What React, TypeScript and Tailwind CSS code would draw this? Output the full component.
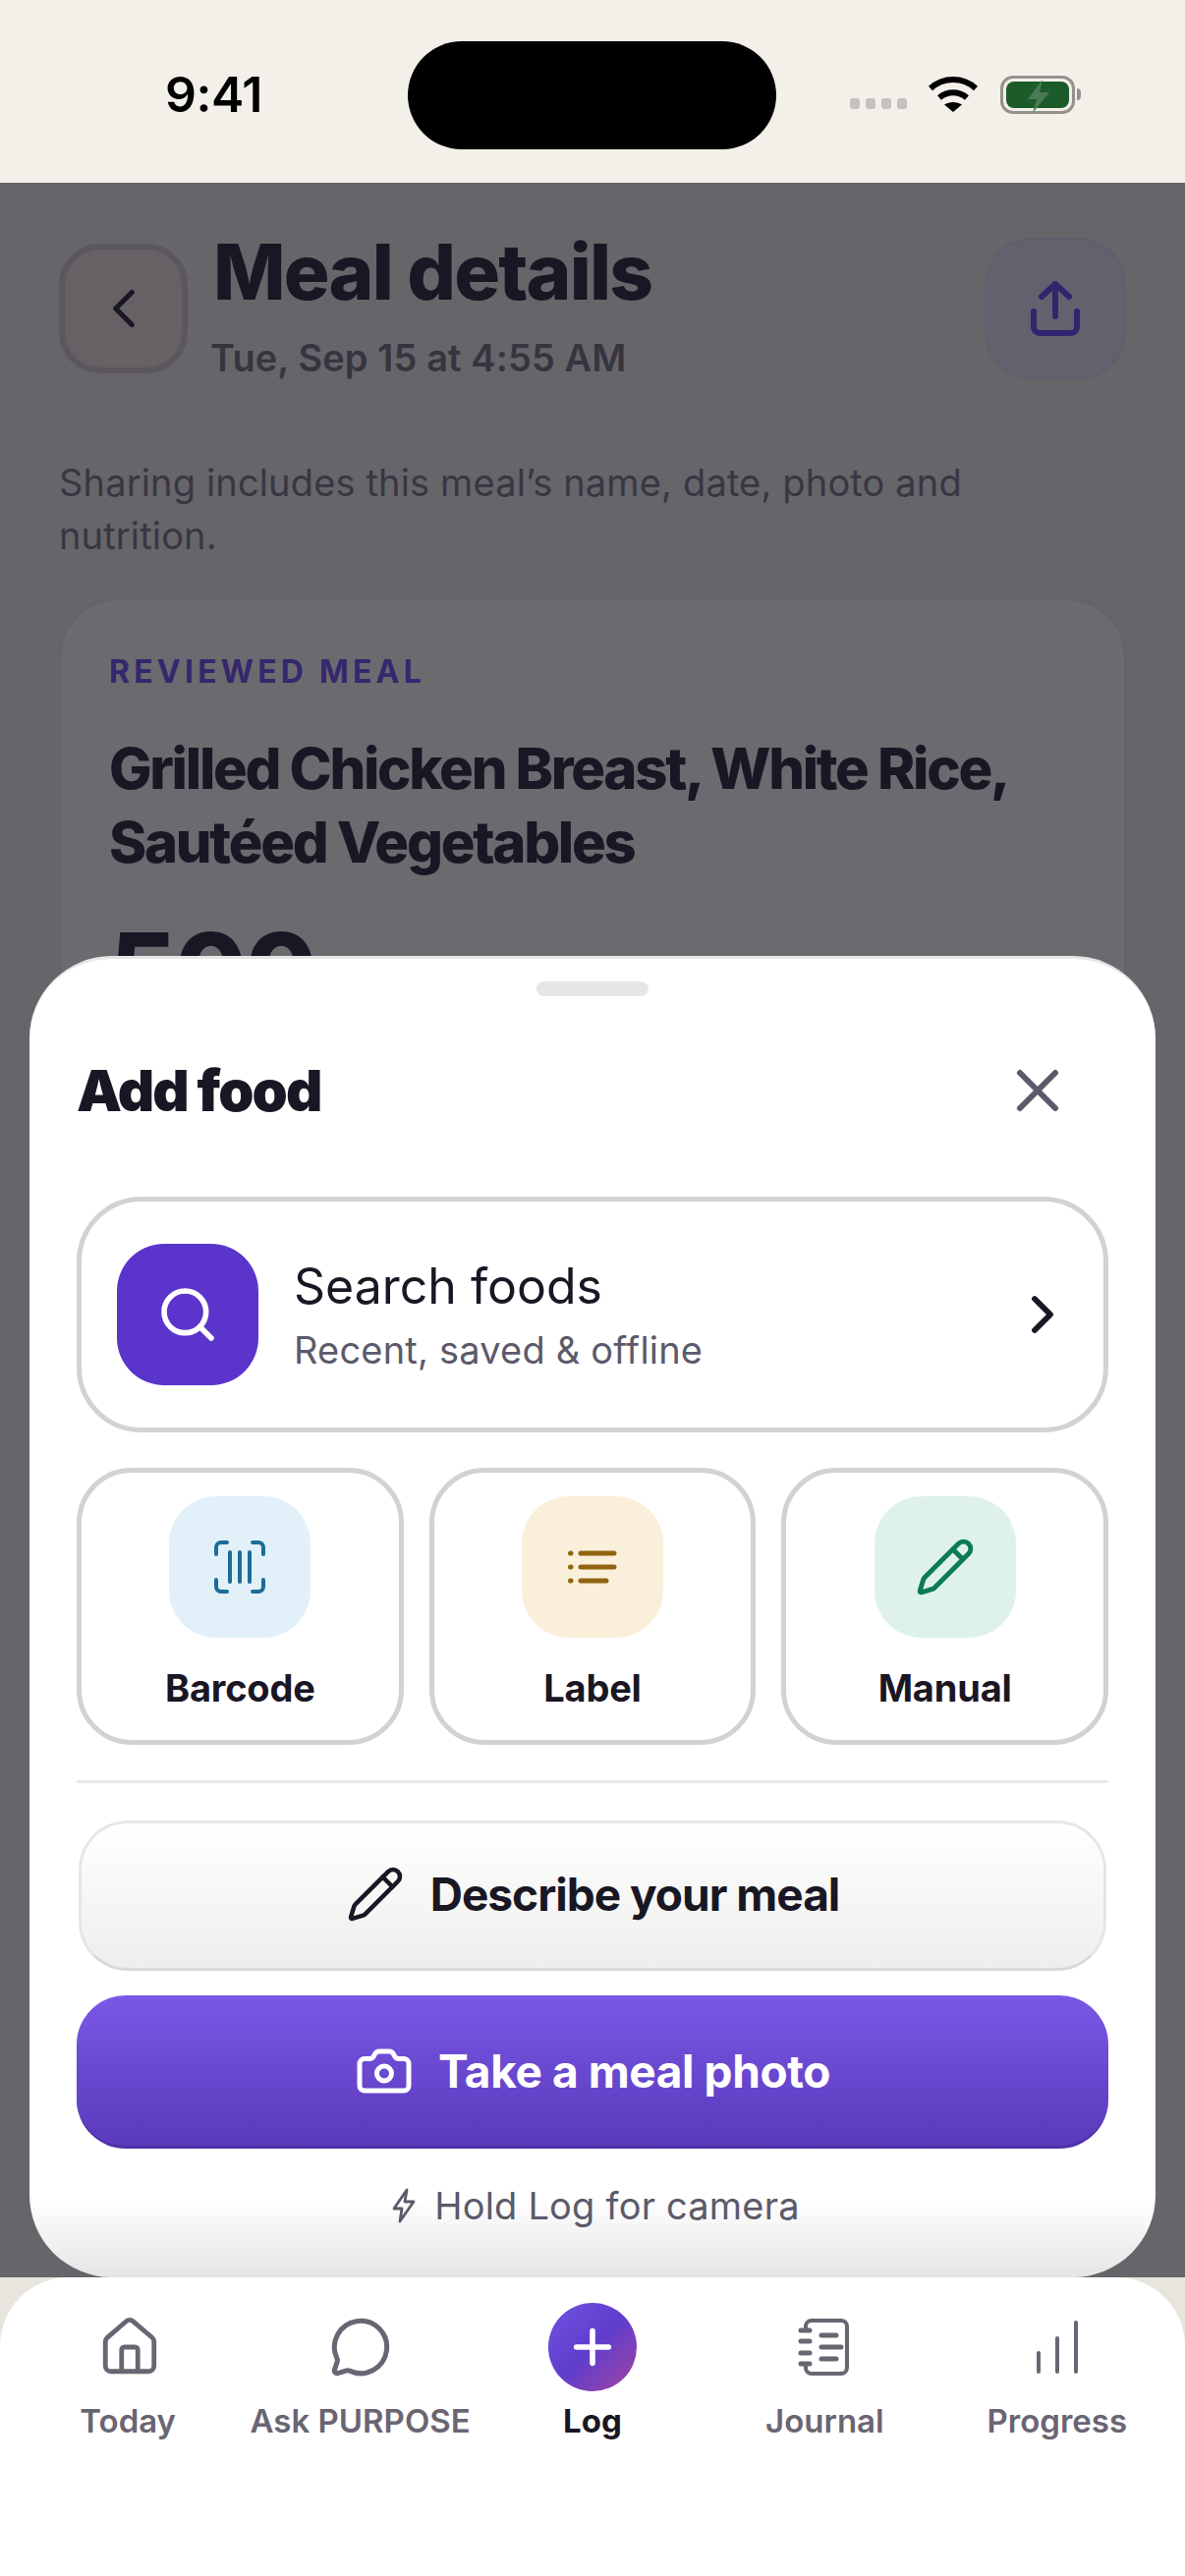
import { Camera, ChevronLeft, ChevronRight, House, MessageCircle, Pencil, Plus, Search, X } from "lucide-react";

function WifiIcon() {
  return (
    <svg width="54" height="40" viewBox="0 0 52 40" fill="none" stroke="black" strokeWidth="6">
      <path d="M3 14C16 2 36 2 49 14" />
      <path d="M12 23.5C20 16.5 32 16.5 40 23.5" />
      <path d="M26 38L17 30.5C22 27 30 27 35 30.5Z" fill="black" stroke="none" />
    </svg>
  );
}

function BatteryIcon() {
  return (
    <div className="flex items-center">
      <div className="relative flex h-[39px] w-[76px] items-center justify-center rounded-[13px] border-[3px] border-[#94928d] p-[3px]">
        <div className="h-full w-full rounded-[8px] bg-[#1c5c2b]" />
        <svg className="absolute left-[22px] top-[1px]" width="28" height="34" viewBox="0 0 28 34" fill="#4a7a55">
          <path d="M18 0 3 20h9l-4 14 17-21h-10z" />
        </svg>
      </div>
      <div className="ml-[2px] h-[12px] w-[4px] rounded-r-full bg-[#94928d]" />
    </div>
  );
}

function ShareIcon() {
  return (
    <svg width="50" height="56" viewBox="0 0 50 56" fill="none" stroke="#33246e" strokeWidth="6" strokeLinecap="round" strokeLinejoin="round">
      <path d="M25 36V3" />
      <path d="M11 16 25 3l14 13" />
      <path d="M3 31v16a6 6 0 0 0 6 6h32a6 6 0 0 0 6-6V31" />
    </svg>
  );
}

function BarcodeIcon() {
  return (
    <svg width="54" height="54" viewBox="0 0 54 54" fill="none" stroke="#1c6d96" strokeWidth="4" strokeLinecap="round" strokeLinejoin="round">
      <path d="M14 2H8a5 5 0 0 0-5 5v7" />
      <path d="M40 2h6a5 5 0 0 1 5 5v7" />
      <path d="M14 52H8a5 5 0 0 1-5-5v-7" />
      <path d="M40 52h6a5 5 0 0 0 5-5v-7" />
      <path d="M17 12v30M27 12v30M37 12v30" />
    </svg>
  );
}

function ListIcon() {
  return (
    <svg width="50" height="34" viewBox="0 0 50 34" fill="none" stroke="#91650f" strokeWidth="5" strokeLinecap="round">
      <path d="M2.5 3h.5M2.5 17h.5M2.5 31h.5" />
      <path d="M13 3h34M13 17h34M13 31h26" />
    </svg>
  );
}

function BoltIcon() {
  return (
    <svg width="26" height="36" viewBox="0 0 26 36" fill="none" stroke="#5c5a6a" strokeWidth="2.8" strokeLinejoin="round">
      <path d="M16 2 3 21h8l-2 13 14-20h-9z" />
    </svg>
  );
}

function JournalIcon() {
  return (
    <svg width="54" height="58" viewBox="0 0 54 58" fill="none" stroke="#6a6572" strokeWidth="4" strokeLinecap="round" strokeLinejoin="round">
      <path d="M8 9V8a6 6 0 0 1 6-6h30a6 6 0 0 1 6 6v42a6 6 0 0 1-6 6H14a6 6 0 0 1-6-6v-1" />
      <path d="M3 12h9M3 23h9M3 35h9M3 46h9" strokeWidth="5" />
      <path d="M24 17h15M24 29h20M24 41h15" strokeWidth="5" />
    </svg>
  );
}

function BarsIcon() {
  return (
    <svg width="44" height="54" viewBox="0 0 44 54" fill="none" stroke="#6a6572" strokeWidth="4" strokeLinecap="round">
      <path d="M3 52V33M22 52V18M41 52V2" />
    </svg>
  );
}

function QuickCard({ label, tile, children }: { label: string; tile: string; children: React.ReactNode }) {
  return (
    <div className="flex h-[282px] flex-col items-center rounded-[56px] border-[5px] border-[#d2d2d2] bg-white pt-[24px]">
      <div className={`flex h-[144px] w-[144px] items-center justify-center rounded-[48px] ${tile}`}>{children}</div>
      <div className="mt-[28px] text-[38px] font-bold leading-[46px] tracking-[-0.2px] text-[#1a1724]">{label}</div>
    </div>
  );
}

function Tab({ label, active, children }: { label: string; active?: boolean; children: React.ReactNode }) {
  return (
    <div className="flex flex-col items-center">
      <div className="flex h-[90px] items-center justify-center">{children}</div>
      <div className={`mt-[8px] text-[33px] leading-[44px] ${active ? "font-bold text-[#1a1724]" : "font-semibold text-[#6a6572]"}`}>{label}</div>
    </div>
  );
}

export default function App() {
  return (
    <div className="relative flex h-[2622px] w-[1206px] flex-col overflow-hidden bg-[#e8e5de] font-[Inter,sans-serif]">
      {/* status bar */}
      <div className="flex h-[186px] shrink-0 items-start bg-[#f3f0e9]">
        <div className="mt-[66px] w-[415px] pl-[168px] text-[50px] font-semibold leading-[60px] tracking-[-0.5px] text-black">9:41</div>
        <div className="mt-[42px] h-[110px] w-[375px] rounded-[55px] bg-black" />
        <div className="mt-[76px] flex items-center pl-[75px]">
          <div className="mt-[18px] flex gap-[6px]">
            <div className="h-[11px] w-[10px] rounded-[3px] bg-[#c4c2bc]" />
            <div className="h-[11px] w-[10px] rounded-[3px] bg-[#c4c2bc]" />
            <div className="h-[11px] w-[10px] rounded-[3px] bg-[#c4c2bc]" />
            <div className="h-[11px] w-[10px] rounded-[3px] bg-[#c4c2bc]" />
          </div>
          <div className="ml-[20px]"><WifiIcon /></div>
          <div className="ml-[21px]"><BatteryIcon /></div>
        </div>
      </div>

      {/* page behind the sheet, dimmed */}
      <div className="h-[2132px] shrink-0 overflow-hidden bg-[#666569] px-[60px] pt-[56px]">
        <div className="flex items-start">
          <div className="mt-[6px] flex h-[132px] w-[131px] shrink-0 items-center justify-center rounded-[42px] border-[6px] border-[#5b575c] bg-[#666165]">
            <ChevronLeft size={66} strokeWidth={1.9} className="text-[#1a1724]" />
          </div>
          <div className="ml-[26px] flex-1">
            <div className="-mt-[7px] text-[78px] font-extrabold leading-[84px] tracking-[-1.8px] text-[#1a1724]">Meal details</div>
            <div className="-ml-[3px] mt-[21px] text-[38px] font-semibold leading-[48px] tracking-[0.1px] text-[#37343f]">Tue, Sep 15 at 4:55 AM</div>
          </div>
          <div className="flex h-[144px] w-[144px] shrink-0 items-center justify-center rounded-[48px] border-[3px] border-[#625f6c] bg-[#64616e]">
            <ShareIcon />
          </div>
        </div>
        <div className="mt-[76px] w-[1040px] text-[38px] leading-[54px] tracking-[0.15px] text-[#393643]">Sharing includes this meal’s name, date, photo and nutrition.</div>
        <div className="mt-[37px] h-[1500px] rounded-[60px] border-[2px] border-[#646367] bg-[#6b6a6f] px-[49px] pt-[53px]">
          <div className="text-[32px] font-bold leading-[40px] tracking-[4.2px] text-[#35276d]">REVIEWED MEAL</div>
          <div className="mt-[41px] text-[58px] font-extrabold leading-[75px] tracking-[-2.3px] text-[#1a1724]">Grilled Chicken Breast, White Rice,<br />Sautéed Vegetables</div>
          <div className="mt-[33px] text-[106px] font-extrabold leading-[120px] tracking-[-2px] text-[#1a1724]">500</div>
        </div>
      </div>

      {/* tab bar */}
      <div className="z-10 grid flex-1 grid-cols-5 content-start rounded-t-[70px] bg-white px-[12px] pt-[26px]">
        <Tab label="Today"><House size={66} strokeWidth={1.75} className="ml-[4px] text-[#6a6572]" /></Tab>
        <Tab label="Ask PURPOSE"><MessageCircle size={64} strokeWidth={1.9} className="text-[#6a6572]" /></Tab>
        <Tab label="Log" active>
          <div className="flex h-[90px] w-[90px] items-center justify-center rounded-full bg-gradient-to-br from-[#7253e3] via-[#5f3dcc] to-[#a33ca0]">
            <Plus size={56} strokeWidth={2.4} className="text-white" />
          </div>
        </Tab>
        <Tab label="Journal"><JournalIcon /></Tab>
        <Tab label="Progress"><BarsIcon /></Tab>
      </div>

      {/* add food sheet */}
      <div className="absolute left-[30px] top-[973px] h-[1345px] w-[1146px] rounded-[84px] border-t-[3px] border-[#e6e6e6] bg-gradient-to-b from-white from-[94%] to-[#e5e5e5] px-[48px] pt-[23px]">
        <div className="mx-auto h-[15px] w-[114px] rounded-[8px] bg-[#e6e6e6]" />
        <div className="mt-[51px] flex h-[90px] items-center justify-between">
          <div className="text-[58px] font-black leading-[70px] tracking-[-1.9px] text-[#1a1724]">Add food</div>
          <X size={72} strokeWidth={2} className="mr-[36px] text-[#5c5a6a]" />
        </div>
        <div className="mt-[63px] flex h-[240px] items-center rounded-[66px] border-[5px] border-[#d2d2d2] bg-white pl-[36px] pr-[30px]">
          <div className="flex h-[144px] w-[144px] shrink-0 items-center justify-center rounded-[48px] bg-[#5b35cb]">
            <Search size={64} strokeWidth={2.1} className="text-white" />
          </div>
          <div className="ml-[36px] flex-1">
            <div className="text-[50px] leading-[62px] text-[#1a1724]">Search foods</div>
            <div className="mt-[9px] text-[38px] leading-[50px] tracking-[0.2px] text-[#5c5a6a]">Recent, saved &amp; offline</div>
          </div>
          <ChevronRight size={64} strokeWidth={2.2} className="text-[#1a1724]" />
        </div>
        <div className="mt-[36px] grid grid-cols-3 gap-[26px]">
          <QuickCard label="Barcode" tile="bg-[#e2f1f9]"><BarcodeIcon /></QuickCard>
          <QuickCard label="Label" tile="bg-[#faefda]"><ListIcon /></QuickCard>
          <QuickCard label="Manual" tile="bg-[#def2ea]"><Pencil size={62} strokeWidth={1.9} className="text-[#0b7a5a]" /></QuickCard>
        </div>
        <div className="mt-[36px] h-[3px] bg-[#e8e8e8]" />
        <div className="mx-[2px] mt-[38px] flex h-[153px] items-center justify-center gap-[26px] rounded-[50px] border-[3px] border-[#e6e6e4] border-b-[#d9d9d6] bg-gradient-to-b from-white to-[#eeeeec] pb-[3px]">
          <Pencil size={60} strokeWidth={1.8} className="text-[#1a1724]" />
          <div className="text-[46px] font-bold leading-[56px] tracking-[-1px] text-[#1a1724]">Describe your meal</div>
        </div>
        <div className="mt-[25px] flex h-[156px] items-center justify-center gap-[25px] rounded-[50px] border-b-[3px] border-[#4e30a8] bg-gradient-to-b from-[#7a58e6] to-[#5a39bb]">
          <Camera size={60} strokeWidth={2} className="text-white" />
          <div className="text-[46px] font-bold leading-[56px] tracking-[-0.4px] text-white">Take a meal photo</div>
        </div>
        <div className="ml-[6px] mt-[33px] flex items-center justify-center gap-[18px]">
          <BoltIcon />
          <div className="text-[38px] leading-[50px] tracking-[0.2px] text-[#5c5a6a]">Hold Log for camera</div>
        </div>
      </div>
    </div>
  );
}
